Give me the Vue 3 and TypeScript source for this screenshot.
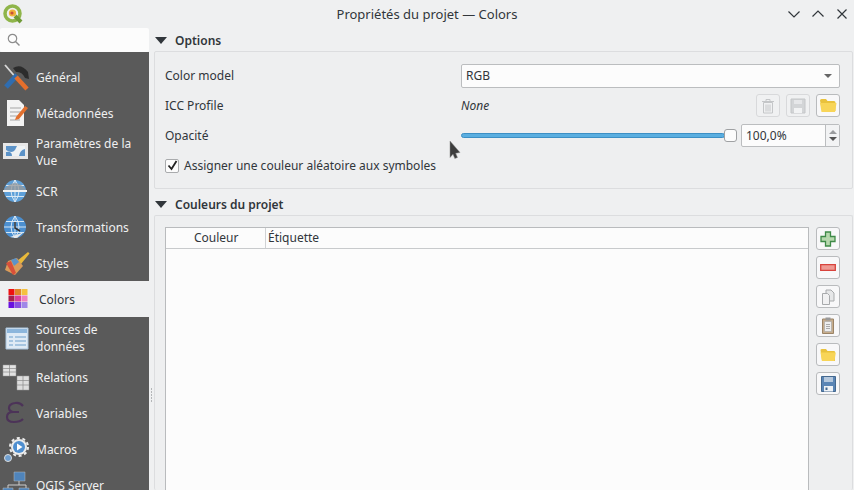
<template>
  <div class="win">
    <header class="titlebar">
      <svg class="logo" width="22" height="22" viewBox="0 0 22 22">
        <circle cx="10.5" cy="10.5" r="7.5" fill="none" stroke="#8fb54a" stroke-width="3.5" />
        <path d="M13 13l6 6" stroke="#6f9a36" stroke-width="4" />
        <circle cx="10.5" cy="10" r="3.6" fill="#efb23c" />
        <circle cx="10" cy="10" r="1.6" fill="#c9503a" />
      </svg>
      <span class="wintitle">Propriétés du projet — Colors</span>
      <div class="winbtns">
        <svg width="12" height="10" viewBox="0 0 12 10"><path d="M.5 2.500l5.500 5.500 5.500-5.500" /></svg>
        <svg width="12" height="10" viewBox="0 0 12 10"><path d="M.5 7.500l5.500-5.500 5.500 5.500" /></svg>
        <svg width="12" height="10" viewBox="0 0 12 10"><path d="M1.500.5l9 9M10.500.5l-9 9" /></svg>
      </div>
    </header>

    <div class="body">
      <aside class="side">
        <div class="search">
          <svg width="14" height="14" viewBox="0 0 14 14">
            <circle cx="5.500" cy="5.500" r="4.200" fill="none" stroke="#8c8c8c" stroke-width="1.200" />
            <path d="M8.500 8.500l4 4" stroke="#8c8c8c" stroke-width="1.500" />
          </svg>
        </div>
        <ul class="nav">
          <li v-for="item in navItems" :key="item.label" :class="{ sel: item.sel, tall: item.tall }">
            <svg class="navicon" width="30" height="28" viewBox="0 0 30 28" v-html="item.icon"></svg>
            <span>{{ item.label }}</span>
          </li>
        </ul>
      </aside>

      <div class="splitter"><i></i><i></i><i></i><i></i><i></i></div>

      <main class="main">
        <section class="group">
          <h2><b class="tri"></b>Options</h2>
          <div class="box options">
            <div class="row">
              <label>Color model</label>
              <div class="combo">RGB<b class="caret"></b></div>
            </div>
            <div class="row">
              <label>ICC Profile</label>
              <em>None</em>
              <div class="toolbtns">
                <button class="tool off">
                  <svg width="14" height="16" viewBox="0 0 14 16"><path d="M1 3.500h12M5 3V1.500h4V3M2.500 4.500h9V15h-9zM5 6.500v7M7 6.500v7M9 6.500v7" fill="none" stroke="#c4c6c8" /></svg>
                </button>
                <button class="tool off">
                  <svg width="16" height="16" viewBox="0 0 16 16"><path d="M1 1h14v14H1z" fill="#d3d5d7" stroke="#c4c6c8" /><path d="M4 2h8v4H4z" fill="#e6e7e9" /><path d="M4 10h8v5H4z" fill="#f2f3f4" /></svg>
                </button>
                <button class="tool">
                  <svg width="18" height="15" viewBox="0 0 18 15"><path d="M1 2.500Q1 1 2.500 1H7l1.500 2H15q1.500 0 1.500 1.500V13H3z" fill="#e9c23d" /><path d="M1 5h16.500L16 14H2.500z" fill="#f8d558" /></svg>
                </button>
              </div>
            </div>
            <div class="row">
              <label>Opacité</label>
              <div class="slider"><div class="track"></div><div class="thumb"></div></div>
              <div class="spin">
                <span>100,0%</span>
                <div class="arrows"><b class="up"></b><b class="down"></b></div>
              </div>
            </div>
            <div class="row check">
              <span class="cb">
                <svg width="11" height="11" viewBox="0 0 11 11"><path d="M1.500 5.500l3 3.500 5-8" fill="none" stroke="#222" stroke-width="1.800" /></svg>
              </span>
              <span>Assigner une couleur aléatoire aux symboles</span>
            </div>
          </div>
        </section>

        <section class="group colors">
          <h2><b class="tri"></b>Couleurs du projet</h2>
          <div class="box table-box">
            <div class="table">
              <div class="thead">
                <span class="c1">Couleur</span>
                <span class="c2">Étiquette</span>
              </div>
            </div>
            <div class="side-btns">
              <button class="tool">
                <svg width="16" height="16" viewBox="0 0 16 16"><path d="M5.500 1h5v4.500H15v5h-4.500V15h-5v-4.500H1v-5h4.500z" fill="#b7d8ae" stroke="#3f8a48" stroke-width="1.300" /></svg>
              </button>
              <button class="tool">
                <svg width="16" height="7" viewBox="0 0 16 7"><path d="M.7.700h14.600v5.600H.7z" fill="#ee9a93" stroke="#d8433c" stroke-width="1.300" /></svg>
              </button>
              <button class="tool">
                <svg width="14" height="16" viewBox="0 0 14 16"><path d="M5 1h5l3 3v8H5z" fill="#e6e7e8" stroke="#a8aaac" /><path d="M1.500 4.500h5l2 2v9h-7z" fill="#f1f1f2" stroke="#a8aaac" /></svg>
              </button>
              <button class="tool">
                <svg width="12" height="17" viewBox="0 0 12 17"><path d="M.5 2h11v14.500H.5z" fill="#c7ad8c" stroke="#9b8467" /><path d="M2.500 4.500h7v10h-7z" fill="#eeeeee" stroke="#a5a5a5" stroke-width=".6" /><path d="M3.500.5h5v3h-5z" fill="#999" /><path d="M4 7.500h4M4 9.500h4M4 11.500h4" stroke="#aaa" /></svg>
              </button>
              <button class="tool">
                <svg width="16" height="14" viewBox="0 0 16 14"><path d="M.5 2Q.5 1 2 1h4l1.500 2H14q1 0 1 1v9H2z" fill="#e9c23d" /><path d="M.5 4.500h15.300L14.500 13H2z" fill="#f8d558" /></svg>
              </button>
              <button class="tool">
                <svg width="15" height="16" viewBox="0 0 15 16"><path d="M.5.500h14v15H.5z" fill="#5a85b5" stroke="#44688f" /><path d="M3 1h9v5H3z" fill="#b5c8dd" /><path d="M3 10h9v5.500H3z" fill="#eef2f6" /><path d="M4.500 11.500h2v2.500h-2z" fill="#44688f" /></svg>
              </button>
            </div>
          </div>
        </section>
      </main>
    </div>

    <svg class="cursor" width="14" height="22" viewBox="0 0 14 22">
      <path d="M1 1v16.500l3-3.200 1.800 4.200 2.700-1-1.800-4.200 4.300-.8z" fill="#3d3d3d" stroke="#8a8a8a" stroke-width=".5" />
    </svg>
  </div>
</template>

<script setup lang="ts">
interface NavItem {
  label: string
  icon: string
  sel?: boolean
  tall?: boolean
}

const globe = (c: string) =>
  `<circle cx="14" cy="14" r="11" fill="${c}"/><path d="M3 14h22M14 3v22M5 8.500h18M5 19.500h18M14 3q-8 11 0 22M14 3q8 11 0 22" fill="none" stroke="#e4eef6" stroke-width=".9"/>`

const colorCells = ['#ee1212', '#e2862a', '#f5c13f', '#a8204e', '#d8409a', '#f080c0', '#6a10e0', '#8a50e0', '#a088e8']
const swatches = colorCells
  .map((c, i) => `<rect x="${4.5 + (i % 3) * 6.5}" y="${4 + Math.floor(i / 3) * 6.5}" width="6" height="6" fill="${c}"/>`)
  .join('')

const navItems: NavItem[] = [
  {
    label: 'Général',
    icon: `<path d="M4 2l13 15" stroke="#d8d8d8" stroke-width="1.800"/><path d="M16 12L5 24" stroke="#2f6db0" stroke-width="5"/><path d="M12 5q8-5 15 4l1 7-4-1q-3-7-9-6z" fill="#2c2c2c"/><path d="M15 14l11 12" stroke="#e56f2c" stroke-width="4.500"/>`
  },
  {
    label: 'Métadonnées',
    icon: `<path d="M6 1h12l5 5v21H6z" fill="#f3f3f3"/><path d="M9 9h11M9 13h11M9 17h10M9 21h10" stroke="#a5a5a5"/><path d="M15 18l9-11 3 2-9 11-4 1z" fill="#e2702e"/>`
  },
  {
    label: 'Paramètres de la Vue',
    tall: true,
    icon: `<path d="M2 5h25v16H2z" fill="#e7e7e7"/><path d="M5 8h19v10H5z" fill="#5c93c8"/><path d="M5 12q6 4 9 0l2-4h8v3q-5 1-6 7h-7q0-5-6-4z" fill="#eef2f4"/>`
  },
  { label: 'SCR', icon: globe('#5d9fd8') + `<path d="M2 14q12-16 24 0z" fill="#9a9a9a" opacity=".75"/><path d="M2 14h24" stroke="#f2f2f2" stroke-width="2"/>` },
  { label: 'Transformations', icon: globe('#4b8fd0') + `<path d="M14 9v6l5 3" stroke="#333" fill="none" stroke-width="1.500"/><path d="M9 24l9-3 5-2-7 6z" fill="#e8e8e8"/>` },
  {
    label: 'Styles',
    icon: `<path d="M16 12L27 3l1.500 1.500L20 15z" fill="#e8b93a"/><path d="M7 12l9-3 6 8-8 9-10-5z" fill="#d99b5a"/><path d="M5 14l5-2 5 12-3 2z" fill="#d8503a"/><path d="M10 11l5-2 3 4-5 4z" fill="#5c93c8"/>`
  },
  { label: 'Colors', sel: true, icon: swatches },
  {
    label: 'Sources de données',
    tall: true,
    icon: `<path d="M5 4h22v21H5z" fill="#dfeaf5" stroke="#a9c4dd"/><path d="M6 5h20v4H6z" fill="#8db6dc"/><path d="M8 13h4M14 13h11M8 17h4M14 17h11M8 21h4M14 21h11" stroke="#6d9fcc"/>`
  },
  {
    label: 'Relations',
    icon: `<path d="M2 2h13v11H2z" fill="#e2e2e2" stroke="#999" stroke-width=".5"/><path d="M2 5.500h13M2 9h13M8.500 2v11" stroke="#8a8a8a" stroke-width=".7"/><path d="M16 13h12v14H16z" fill="#dedede" stroke="#999" stroke-width=".5"/><path d="M16 17.500h12M16 22h12M22 13v14" stroke="#8a8a8a" stroke-width=".7"/>`
  },
  {
    label: 'Variables',
    icon: `<path d="M22 7q-3-4-8-3-6 1-6 5 0 3 4 4-6 0-6 5 0 5 7 5 6 0 9-3M12 13h6" fill="none" stroke="#4c3358" stroke-width="2.200"/>`
  },
  {
    label: 'Macros',
    icon: `<circle cx="18" cy="12" r="9" fill="none" stroke="#ececec" stroke-width="2" stroke-dasharray="3 2.700"/><circle cx="18" cy="12" r="8" fill="#ececec"/><circle cx="18" cy="12" r="6" fill="#4f8fd0"/><path d="M16 8.500l5.500 3.500-5.500 3.500z" fill="#fff"/><circle cx="7" cy="23" r="3.500" fill="#6f9fd0" stroke="#ddd"/>`
  },
  {
    label: 'QGIS Server',
    icon: `<path d="M13 1h11v9H13zM2 17h10v9H2zM18 17h10v9H18z" fill="#4f84bb" stroke="#bbb" stroke-width=".5"/><path d="M18 10v4M7 17v-3h18v3" fill="none" stroke="#ccc"/>`
  }
]
</script>

<style scoped>
.win {
  position: relative;
  width: 854px;
  height: 490px;
  overflow: hidden;
  display: flex;
  flex-direction: column;
  background: #eff0f1;
  color: #31363b;
  font: 12px/17px "Noto Sans", sans-serif;
}

.titlebar {
  height: 28px;
  flex: none;
  display: flex;
  align-items: center;
  justify-content: center;
  position: relative;
  font-size: 13px;
}

.logo {
  position: absolute;
  left: 2px;
  top: 3px;
}

.winbtns {
  position: absolute;
  right: 6px;
  top: 9px;
  display: flex;
  align-items: center;
  gap: 12px;
}

.winbtns svg {
  fill: none;
  stroke: #31363b;
  stroke-width: 1.200;
}

.body {
  flex: 1;
  min-height: 0;
  display: flex;
}

.side {
  width: 149px;
  flex: none;
  display: flex;
  flex-direction: column;
}

.search {
  height: 24px;
  flex: none;
  background: #fcfcfc;
  display: flex;
  align-items: center;
  padding-left: 7px;
  border-radius: 2px;
}

.nav {
  list-style: none;
  margin: 0;
  padding: 7px 0 0;
  flex: 1;
  background: #5a5a5a;
  color: #eff0f1;
}

.nav li {
  height: 36px;
  display: flex;
  align-items: center;
  gap: 5px;
  padding-left: 1px;
}

.nav li.tall {
  height: 42px;
}

.nav li.sel {
  background: #eff0f1;
  color: #31363b;
  padding-left: 4px;
}

.navicon {
  flex: none;
}

.splitter {
  width: 5px;
  flex: none;
  display: flex;
  flex-direction: column;
  justify-content: center;
  align-items: center;
  gap: 1px;
  padding-top: 272px;
  box-sizing: border-box;
}

.splitter i {
  width: 1px;
  height: 2px;
  background: #b4b6b8;
}

.main {
  flex: 1;
  min-width: 0;
  display: flex;
  flex-direction: column;
  padding-right: 1px;
}

h2 {
  margin: 0;
  height: 23px;
  box-sizing: border-box;
  padding: 1px 0 0 1px;
  display: flex;
  align-items: center;
  gap: 8px;
  font-size: 12px;
  font-weight: 600;
}

.tri {
  width: 0;
  height: 0;
  border-left: 6px solid transparent;
  border-right: 6px solid transparent;
  border-top: 7px solid #31363b;
}

.box {
  border: 1px solid #dcdddf;
  border-radius: 2px;
  background: #eeeff0;
}

.options {
  height: 138px;
  box-sizing: border-box;
  padding: 11px 12px 0 10px;
  display: flex;
  flex-direction: column;
  gap: 5px;
}

.row {
  height: 25px;
  flex: none;
  display: flex;
  align-items: center;
}

.row label {
  width: 296px;
  flex: none;
}

.combo {
  flex: 1;
  height: 24px;
  box-sizing: border-box;
  background: #fcfcfc;
  border: 1px solid #bbbdbf;
  border-radius: 2px;
  padding-left: 4px;
  display: flex;
  align-items: center;
  position: relative;
}

.caret {
  position: absolute;
  right: 7px;
  top: 9px;
  border-left: 4px solid transparent;
  border-right: 4px solid transparent;
  border-top: 4px solid #666;
}

.row em {
  flex: 1;
}

.toolbtns {
  display: flex;
  gap: 6px;
}

.tool {
  width: 24px;
  height: 23px;
  box-sizing: border-box;
  padding: 0;
  background: #f8f8f9;
  border: 1px solid #b9bbbd;
  border-radius: 3px;
  display: flex;
  align-items: center;
  justify-content: center;
}

.tool.off {
  border-color: #d8d9db;
  background: #f0f1f2;
}

.slider {
  flex: 1;
  height: 14px;
  display: flex;
  align-items: center;
}

.track {
  flex: 1;
  height: 5px;
  background: #5aaee0;
  border: 1px solid #3d8fc4;
  border-radius: 3px;
  box-sizing: border-box;
}

.thumb {
  width: 13px;
  height: 13px;
  box-sizing: border-box;
  background: #fcfcfc;
  border: 1px solid #9fa1a3;
  border-radius: 3px;
  margin-left: -1px;
  margin-right: 4px;
}

.spin {
  width: 99px;
  height: 23px;
  box-sizing: border-box;
  flex: none;
  background: #fcfcfc;
  border: 1px solid #bbbdbf;
  border-radius: 2px;
  display: flex;
  align-items: center;
  justify-content: space-between;
  padding-left: 4px;
}

.arrows {
  width: 13px;
  height: 100%;
  border-left: 1px solid #bbbdbf;
  background: #f2f3f4;
  display: flex;
  flex-direction: column;
  align-items: center;
  justify-content: center;
  gap: 3px;
}

.up {
  border-left: 4px solid transparent;
  border-right: 4px solid transparent;
  border-bottom: 4px solid #9a9c9e;
}

.down {
  border-left: 4px solid transparent;
  border-right: 4px solid transparent;
  border-top: 4px solid #555;
}

.check {
  gap: 5px;
}

.cb {
  width: 14px;
  height: 14px;
  box-sizing: border-box;
  background: #fcfcfc;
  border: 1px solid #a9abad;
  border-radius: 2px;
  display: flex;
  align-items: center;
  justify-content: center;
}

.group.colors {
  flex: 1;
  min-height: 0;
  display: flex;
  flex-direction: column;
  margin-top: 3px;
}

.table-box {
  flex: 1;
  display: flex;
  gap: 7px;
  padding: 11px 12px 0 10px;
  border-bottom: none;
}

.table {
  flex: 1;
  background: #fcfcfc;
  border: 1px solid #b9bbbd;
  border-bottom: none;
}

.thead {
  height: 20px;
  display: flex;
  border-bottom: 1px solid #c8cacc;
  line-height: 20px;
}

.c1 {
  width: 100px;
  box-sizing: border-box;
  padding-left: 28px;
  border-right: 1px solid #d0d2d4;
}

.c2 {
  padding-left: 2px;
}

.side-btns {
  display: flex;
  flex-direction: column;
  gap: 6px;
}

.cursor {
  position: absolute;
  left: 449px;
  top: 140px;
}
</style>

<style>
html,
body {
  margin: 0;
  background: #eff0f1;
}
</style>
